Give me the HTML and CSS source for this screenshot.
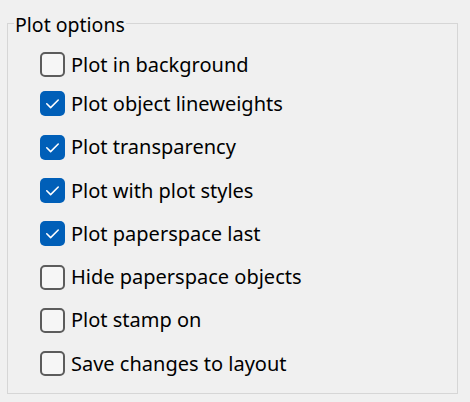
FILE: index.html
```html
<!DOCTYPE html>
<html>
<head>
<meta charset="utf-8">
<link rel="stylesheet" href="styles.css">
</head>
<body>
<fieldset class="group">
  <legend class="group-title">Plot options</legend>
  <ul class="options">
    <li class="option"><span class="box"></span><span class="label">Plot in background</span></li>
    <li class="option"><span class="box checked"><svg viewBox="0 0 24 24" class="tick"><path d="M6.5 12.3 L10.2 16 L17.5 8.7"/></svg></span><span class="label">Plot object lineweights</span></li>
    <li class="option"><span class="box checked"><svg viewBox="0 0 24 24" class="tick"><path d="M6.5 12.3 L10.2 16 L17.5 8.7"/></svg></span><span class="label">Plot transparency</span></li>
    <li class="option"><span class="box checked"><svg viewBox="0 0 24 24" class="tick"><path d="M6.5 12.3 L10.2 16 L17.5 8.7"/></svg></span><span class="label">Plot with plot styles</span></li>
    <li class="option"><span class="box checked"><svg viewBox="0 0 24 24" class="tick"><path d="M6.5 12.3 L10.2 16 L17.5 8.7"/></svg></span><span class="label">Plot paperspace last</span></li>
    <li class="option"><span class="box"></span><span class="label">Hide paperspace objects</span></li>
    <li class="option"><span class="box"></span><span class="label">Plot stamp on</span></li>
    <li class="option"><span class="box"></span><span class="label">Save changes to layout</span></li>
  </ul>
</fieldset>
</body>
</html>
```

FILE: styles.css
```css
html, body {
  margin: 0;
  padding: 0;
  background: #f0f0f0;
}
body {
  width: 470px;
  height: 402px;
  overflow: hidden;
  font-family: "Noto Sans", "Open Sans", sans-serif;
  color: #000;
}
.group {
  box-sizing: border-box;
  margin: 10px 0 0 7px;
  width: 451px;
  height: 384px;
  padding: 0;
  border: 1px solid #d6d6d6;
}
.group-title {
  margin-left: 6px;
  padding: 4px 1px 0;
  font-size: 19.5px;
  line-height: 22px;
}
.options {
  list-style: none;
  margin: 0;
  padding: 7px 0 0 32px;
}
.option {
  display: flex;
  align-items: center;
  height: 43.3px;
}
.option:first-child {
  margin-bottom: -4px;
}
.box {
  box-sizing: border-box;
  width: 25px;
  height: 25px;
  border: 2px solid #5c5c5c;
  border-radius: 5px;
  background: #f6f6f6;
  margin-right: 6px;
  display: flex;
  align-items: center;
  justify-content: center;
}
.box.checked {
  border: none;
  background: #005fb8;
}
.tick {
  width: 25px;
  height: 25px;
}
.tick path {
  fill: none;
  stroke: #fff;
  stroke-width: 1.5;
  stroke-linecap: round;
  stroke-linejoin: round;
}
.label {
  font-size: 20px;
  line-height: 24px;
}
```
